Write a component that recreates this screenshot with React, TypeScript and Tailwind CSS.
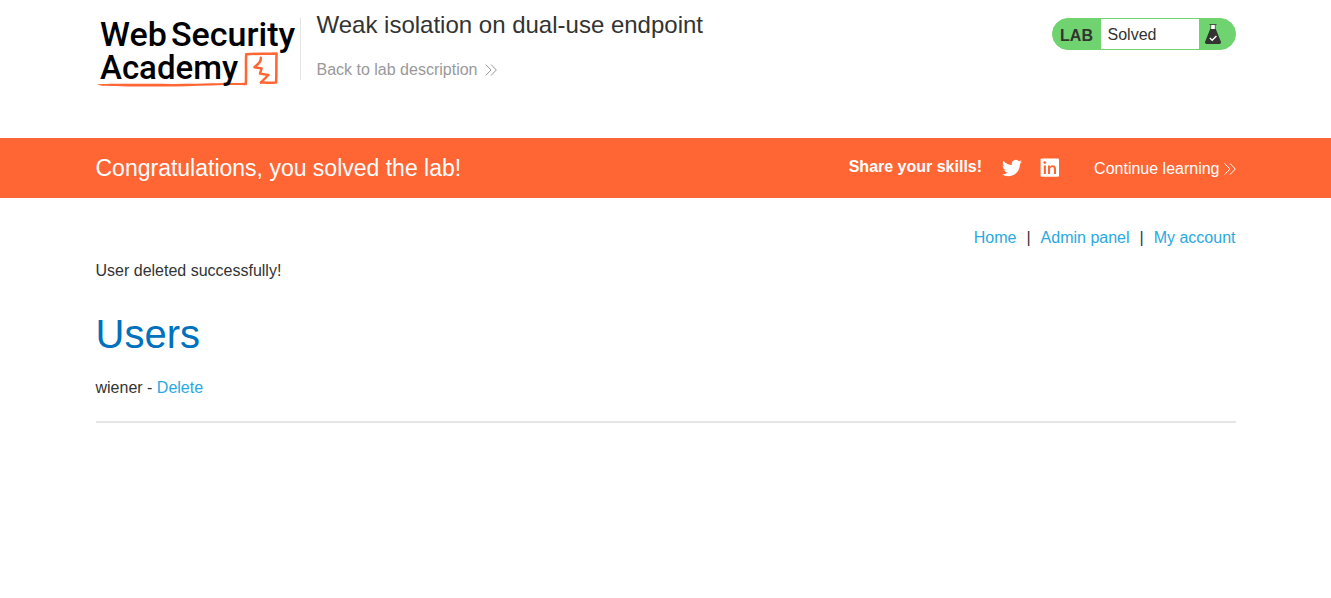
import React from "react";

function AcademyLogo() {
  return (
    <svg
      className="h-[78px] w-[204px] shrink-0"
      viewBox="0 -4 204 78"
      role="img"
      aria-label="Web Security Academy"
    >
      <path
        d="M0.5 66.4 C18 65.2 60 66.2 100 65.8 C122 65 136 65.2 149 64.8 L149 67.2 C130 66.8 110 67.8 90 68.2 C55 68.8 25 68.6 6 67.8 Z"
        fill="#ff6633"
      />
      <path
        d="M149.8 66 C150.4 56 149.6 46 150.2 36.2 C160 35.6 171 35.9 180.6 35.4 C180 45 180.8 55 180 64.6 C175 65 170 64.4 165 64.6"
        fill="none"
        stroke="#ff6633"
        strokeWidth="2.5"
        strokeLinejoin="round"
        strokeLinecap="round"
      />
      <path
        d="M164.8 39.8 C165 42.6 164.4 44 162 46 L158.4 49.2 L165.6 50.4 L164 55.6 L172.4 57 L165 64.4"
        fill="none"
        stroke="#ff6633"
        strokeWidth="2.4"
        strokeLinejoin="round"
        strokeLinecap="round"
      />
      <g fontFamily="Roboto, sans-serif" fontWeight="500" fontSize="34" fill="#000">
        <text x="4" y="28">Web</text>
        <text x="75" y="28">Security</text>
        <text x="4" y="61" fontSize="33">Academy</text>
      </g>
    </svg>
  );
}

function DoubleChevron() {
  return (
    <svg className="size-3 shrink-0" viewBox="0 0 12 12" fill="none" stroke="currentColor" strokeWidth="1" aria-hidden="true">
      <path d="M0.7 0.5 L6 6 L0.7 11.5 M6 0.5 L11.3 6 L6 11.5" />
    </svg>
  );
}

function Flask() {
  return (
    <svg className="h-5 w-4" viewBox="0 0 16 20" aria-hidden="true">
      <path d="M6 1 H10 V6 H6 Z" fill="#fff" />
      <path d="M4.5 0 H11.5 V0.9 H4.5 Z M5.4 0.6 H6.2 V5.4 H5.4 Z M9.8 0.6 H10.6 V5.4 H9.8 Z" fill="#333332" fillOpacity="0.8" />
      <path d="M5.2 5 H10.8 L15.8 17.6 C16.3 19 15.8 20 14.4 20 H1.6 C0.2 20 -0.3 19 0.2 17.6 Z" fill="#333332" />
      <path d="M4.8 14 L7.2 16.3 L11.4 12" fill="none" stroke="#fff" strokeWidth="1.4" />
    </svg>
  );
}

function TwitterIcon() {
  return (
    <svg className="size-5" viewBox="0 0 24 24" fill="currentColor" aria-hidden="true">
      <path d="M23.95 4.57a10 10 0 0 1-2.82.77 4.96 4.96 0 0 0 2.16-2.72c-.95.55-2 .95-3.13 1.18a4.92 4.92 0 0 0-8.38 4.48C7.69 8.1 4.07 6.13 1.64 3.16a4.82 4.82 0 0 0-.67 2.48c0 1.71.87 3.21 2.19 4.1a4.9 4.9 0 0 1-2.23-.62v.06a4.92 4.92 0 0 0 3.95 4.83 5 5 0 0 1-2.21.08 4.94 4.94 0 0 0 4.6 3.42A9.87 9.87 0 0 1 0 19.54a13.99 13.99 0 0 0 7.55 2.21c9.05 0 14-7.5 14-13.98 0-.21 0-.42-.02-.63a9.94 9.94 0 0 0 2.46-2.55z" />
    </svg>
  );
}

function LinkedInIcon() {
  return (
    <svg className="size-5" viewBox="0 0 20 20" aria-hidden="true">
      <rect x="0.6" y="0.4" width="18.4" height="18.4" rx="1.2" fill="currentColor" />
      <g fill="#ff6633">
        <circle cx="4.8" cy="4.6" r="1.4" />
        <path d="M3.8 7.4 H5.9 V16 H3.8 Z" />
        <path d="M8 7.4 H10 V8.7 C10.6 7.7 11.5 7.2 12.6 7.2 C15 7.2 16 8.7 16 11 V16 H13.9 V11.4 C13.9 9.9 13.4 9.1 12.2 9.1 C10.8 9.1 10.1 10 10.1 11.4 V16 H8 Z" />
      </g>
    </svg>
  );
}

export default function App() {
  return (
    <div className="min-h-screen bg-white font-['Liberation_Sans',Arial,sans-serif] text-base text-[#333332]">
      <header className="mx-auto flex max-w-[1140px] items-start justify-between pt-[18px] pb-[46px]">
        <div className="flex items-start">
          <a href="#academy" className="-mt-1">
            <AcademyLogo />
          </a>
          <div className="h-[62px] border-l border-[#e5e5e5] pl-4">
            <h2 className="-mt-2 text-2xl leading-[30px]">Weak isolation on dual-use endpoint</h2>
            <a href="#lab" className="mt-[18px] flex items-center gap-2 text-[#999]">
              Back to lab description
              <DoubleChevron />
            </a>
          </div>
        </div>
        <div className="flex h-8 w-[184px] overflow-hidden rounded-full border border-[#6fd36f] bg-[#6fd36f]">
          <span className="flex w-12 items-center justify-center pt-1 font-bold">LAB</span>
          <p className="flex flex-1 items-center bg-white pl-[7px] pt-px">Solved</p>
          <span className="flex w-9 items-center pl-[6px]">
            <Flask />
          </span>
        </div>
      </header>

      <section className="bg-[#ff6633] text-white">
        <div className="mx-auto flex h-[60px] max-w-[1140px] items-center justify-between">
          <h4 className="text-[23px]">Congratulations, you solved the lab!</h4>
          <div className="flex items-center pt-px">
            <span className="pb-1 font-bold">Share your skills!</span>
            <a href="#twitter" aria-label="Share on Twitter" className="ml-5 pb-px">
              <TwitterIcon />
            </a>
            <a href="#linkedin" aria-label="Share on LinkedIn" className="ml-[18px] pb-px">
              <LinkedInIcon />
            </a>
            <a href="#learn" className="ml-[34px] flex items-center gap-1">
              Continue learning
              <DoubleChevron />
            </a>
          </div>
        </div>
      </section>

      <main className="mx-auto max-w-[1140px] pt-7">
        <nav className="flex justify-end gap-[10px]">
          <a href="#home" className="text-[#29a9e1]">Home</a>
          <span>|</span>
          <a href="#admin" className="text-[#29a9e1]">Admin panel</a>
          <span>|</span>
          <a href="#account" className="text-[#29a9e1]">My account</a>
        </nav>
        <p className="mt-[9px]">User deleted successfully!</p>
        <h1 className="mt-7 text-[40px] leading-[46px] text-[#0071bc]">Users</h1>
        <p className="mt-[19px]">
          wiener - <a href="#delete" className="text-[#29a9e1]">Delete</a>
        </p>
        <hr className="mt-[21px] border-t-2 border-[#e5e5e5]" />
      </main>
    </div>
  );
}
